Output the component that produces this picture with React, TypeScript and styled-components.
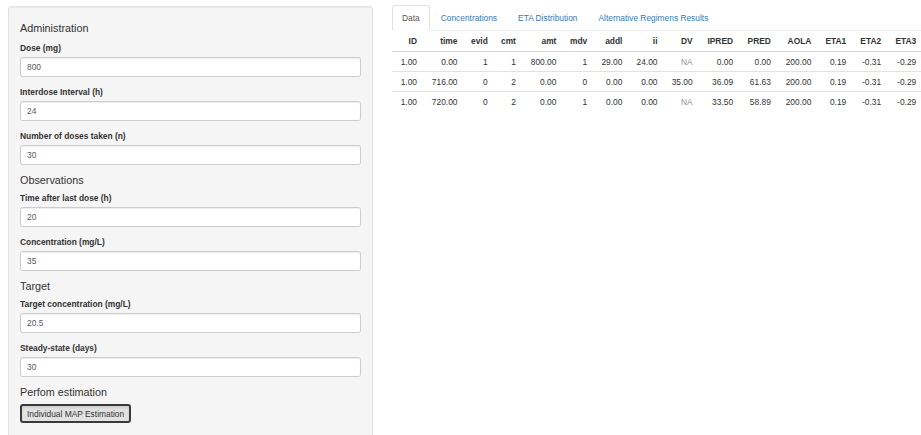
import React from 'react';
import styled, { createGlobalStyle } from 'styled-components';

const GlobalStyle = createGlobalStyle`
  * { box-sizing: border-box; }
  html, body {
    margin: 0;
    padding: 0;
    overflow: hidden;
    background: #fff;
  }
  body {
    font-family: "Liberation Sans", Arial, Helvetica, sans-serif;
    font-size: 8.4px;
    line-height: 12px;
    color: #333;
  }
`;

type Field = { label: string; value: string };
type Section = { title: string; fields: Field[] };

const sections: Section[] = [
    {
        title: 'Administration',
        fields: [
            { label: 'Dose (mg)', value: '800' },
            { label: 'Interdose Interval (h)', value: '24' },
            { label: 'Number of doses taken (n)', value: '30' },
        ],
    },
    {
        title: 'Observations',
        fields: [
            { label: 'Time after last dose (h)', value: '20' },
            { label: 'Concentration (mg/L)', value: '35' },
        ],
    },
    {
        title: 'Target',
        fields: [
            { label: 'Target concentration (mg/L)', value: '20.5' },
            { label: 'Steady-state (days)', value: '30' },
        ],
    },
];

const tabs = ['Data', 'Concentrations', 'ETA Distribution', 'Alternative Regimens Results'];

const columns = ['ID', 'time', 'evid', 'cmt', 'amt', 'mdv', 'addl', 'ii', 'DV', 'IPRED', 'PRED', 'AOLA', 'ETA1', 'ETA2', 'ETA3'];

const rows: string[][] = [
    ['1.00', '0.00', '1', '1', '800.00', '1', '29.00', '24.00', 'NA', '0.00', '0.00', '200.00', '0.19', '-0.31', '-0.29'],
    ['1.00', '716.00', '0', '2', '0.00', '0', '0.00', '0.00', '35.00', '36.09', '61.63', '200.00', '0.19', '-0.31', '-0.29'],
    ['1.00', '720.00', '0', '2', '0.00', '1', '0.00', '0.00', 'NA', '33.50', '58.89', '200.00', '0.19', '-0.31', '-0.29'],
];

const Page = styled.div`
  display: flex;
  align-items: flex-start;
  gap: 19px;
  padding: 5px 0 0 8px;
`;

// sidebar well, runs on past the bottom of the window
const Well = styled.form`
  flex: 0 0 365px;
  margin: 1px 0 0;
  padding: 10px 11px 24px;
  background: #f5f5f5;
  border: 1px solid #e3e3e3;
  border-radius: 3px;
  box-shadow: inset 0 1px 1px rgba(0, 0, 0, 0.05);
`;

const SectionTitle = styled.h4`
  margin: 9px 0 6px;
  font-size: 10.8px;
  line-height: 12px;
  font-weight: 400;
  color: #333;

  &:first-child {
    margin-top: 5px;
    margin-bottom: 8px;
  }
`;

const FormGroup = styled.div`
  margin-bottom: 9px;
`;

const FieldLabel = styled.label`
  display: block;
  margin-bottom: 3px;
  font-weight: 700;
  line-height: 12px;
`;

const TextInput = styled.input`
  display: block;
  width: 100%;
  height: 20px;
  padding: 0 6px;
  font-family: inherit;
  font-size: 8.4px;
  color: #5a5a5a;
  background: #fff;
  border: 1px solid #ccc;
  border-radius: 2.4px;
  box-shadow: inset 0 1px 1px rgba(0, 0, 0, 0.075);
  outline: none;
`;

const ActionButton = styled.button`
  display: block;
  margin-top: 4px;
  height: 19px;
  padding: 0 5px;
  font-family: inherit;
  font-size: 8.4px;
  line-height: 12px;
  color: #333;
  background: #e2e2e2;
  border: 2px solid #3a3a3a;
  border-radius: 3px;
  box-shadow: inset 0 2px 3px rgba(0, 0, 0, 0.08);
`;

const MainPanel = styled.div`
  flex: 1;
  min-width: 0;
`;

const TabBar = styled.ul`
  display: flex;
  margin: 0;
  padding: 0;
  list-style: none;
  border-bottom: 1px solid #ececec;
`;

const Tab = styled.li<{ $active?: boolean }>`
  margin: 0 1px -1px 0;
  padding: 6px 9px;
  line-height: 12px;
  white-space: nowrap;
  color: ${(p) => (p.$active ? '#555' : '#337ab7')};
  background: ${(p) => (p.$active ? '#fff' : 'transparent')};
  border: 1px solid ${(p) => (p.$active ? '#e2e2e2' : 'transparent')};
  border-bottom-color: ${(p) => (p.$active ? '#fff' : 'transparent')};
  border-radius: 3px 3px 0 0;
`;

const DataTable = styled.table`
  width: 100%;
  border-collapse: collapse;
  border-spacing: 0;
`;

const HeadCell = styled.th`
  padding: 4px 4.8px;
  line-height: 12px;
  font-weight: 700;
  text-align: right;
  white-space: nowrap;
  border-bottom: 1px solid #d6d6d6;
`;

const Cell = styled.td<{ $muted?: boolean }>`
  padding: 3.5px 4.8px;
  line-height: 12px;
  text-align: right;
  white-space: nowrap;
  color: ${(p) => (p.$muted ? '#8f8f8f' : '#333')};
  border-top: 1px solid #e2e2e2;
`;

export default function App() {
    return (
        <>
            <GlobalStyle />
            <Page>
                <Well onSubmit={(e) => e.preventDefault()}>
                    {sections.map((section) => (
                        <React.Fragment key={section.title}>
                            <SectionTitle>{section.title}</SectionTitle>
                            {section.fields.map((field) => (
                                <FormGroup key={field.label}>
                                    <FieldLabel>{field.label}</FieldLabel>
                                    <TextInput defaultValue={field.value} />
                                </FormGroup>
                            ))}
                        </React.Fragment>
                    ))}
                    <SectionTitle>Perfom estimation</SectionTitle>
                    <ActionButton type="button">Individual MAP Estimation</ActionButton>
                </Well>
                <MainPanel>
                    <TabBar>
                        {tabs.map((tab, index) => (
                            <Tab key={tab} $active={index === 0}>{tab}</Tab>
                        ))}
                    </TabBar>
                    <DataTable>
                        <thead>
                        <tr>
                            {columns.map((col) => (
                                <HeadCell key={col}>{col}</HeadCell>
                            ))}
                        </tr>
                        </thead>
                        <tbody>
                        {rows.map((row, rowIndex) => (
                            <tr key={rowIndex}>
                                {row.map((value, cellIndex) => (
                                    <Cell key={cellIndex} $muted={value === 'NA'}>{value}</Cell>
                                ))}
                            </tr>
                        ))}
                        </tbody>
                    </DataTable>
                </MainPanel>
            </Page>
        </>
    );
}
